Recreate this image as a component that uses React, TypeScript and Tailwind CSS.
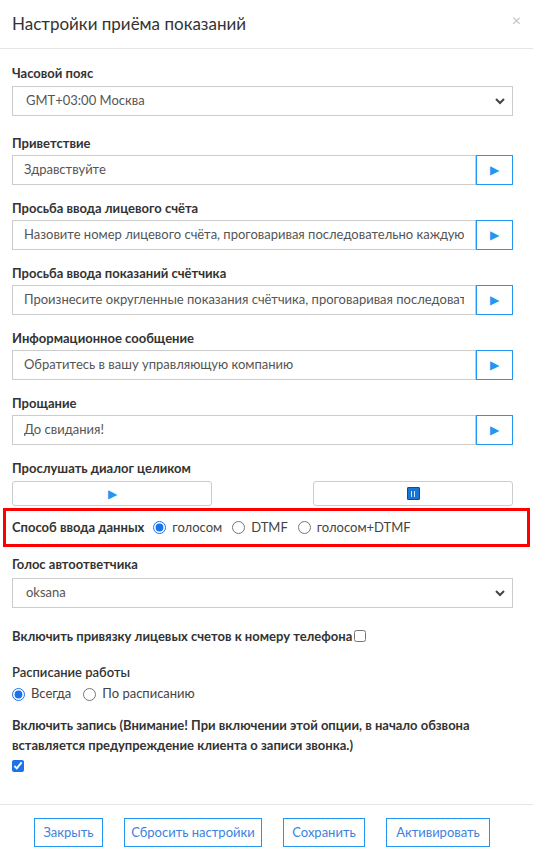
import React from 'react';

const font = "font-['Lato','Liberation_Sans',sans-serif]";

const Label: React.FC<{ children: React.ReactNode; className?: string }> = ({ children, className = '' }) => (
  <div className={`text-[13px] font-bold leading-[18px] text-[#333] ${className}`}>{children}</div>
);

const Chevron = () => (
  <svg width="12" height="12" viewBox="0 0 12 12" className="text-[#444]">
    <path d="M2 4l4 4 4-4" fill="none" stroke="currentColor" strokeWidth="2" />
  </svg>
);

const SelectBox: React.FC<{ value: string }> = ({ value }) => (
  <div className="flex h-[30px] items-center justify-between border border-[#ccc] bg-white pl-[13px] pr-[6px] text-[13px] text-[#555]">
    <span>{value}</span>
    <Chevron />
  </div>
);

const PlayGlyph = () => <span className="text-[12px] leading-none text-[#2196f3]">▶</span>;

const PromptField: React.FC<{ label: string; value: string }> = ({ label, value }) => (
  <div className="mb-[14px]">
    <Label className="mb-[3px]">{label}</Label>
    <div className="flex h-[30px]">
      <input
        readOnly
        value={value}
        className="min-w-0 flex-1 border border-[#ccc] bg-white px-[11px] text-[13px] text-[#555] outline-none"
      />
      <button className="flex w-[37px] items-center justify-center border border-[#2196f3] bg-white">
        <PlayGlyph />
      </button>
    </div>
  </div>
);

const Radio: React.FC<{ checked?: boolean; label: string; name: string }> = ({ checked, label, name }) => (
  <label className="flex items-center gap-[6px]">
    <input type="radio" name={name} defaultChecked={checked} className="m-0 h-[13px] w-[13px] accent-[#1a73e8]" />
    <span>{label}</span>
  </label>
);

const FooterButton: React.FC<{ children: React.ReactNode; w: string }> = ({ children, w }) => (
  <button className={`${w} h-[29px] border-[1.5px] border-[#2196f3] bg-white text-[13px] text-[#3b82e0]`}>
    {children}
  </button>
);

export default function App() {
  return (
    <div className={`${font} min-h-[855px] w-[533px] bg-white text-[#333]`}>
      <div className="flex h-[49px] items-center justify-between border-b border-[#e5e5e5] pl-3 pr-[12px]">
        <h4 className="text-[17px] text-[#333]">Настройки приёма показаний</h4>
        <span className="-mt-[8px] text-[16px] leading-none text-[#c4c4c4]">×</span>
      </div>

      <div className="pl-3 pr-[20px] pt-[15px]">
        <Label className="mb-[4px]">Часовой пояс</Label>
        <SelectBox value="GMT+03:00 Москва" />
        <div className="h-[18px]" />

        <PromptField label="Приветствие" value="Здравствуйте" />
        <PromptField
          label="Просьба ввода лицевого счёта"
          value="Назовите номер лицевого счёта, проговаривая последовательно каждую цифру"
        />
        <PromptField
          label="Просьба ввода показаний счётчика"
          value="Произнесите округленные показания счётчика, проговаривая последовательно каждую цифру"
        />
        <PromptField label="Информационное сообщение" value="Обратитесь в вашу управляющую компанию" />
        <PromptField label="Прощание" value="До свидания!" />

        <Label className="mt-[2px] mb-[4px]">Прослушать диалог целиком</Label>
        <div className="flex justify-between">
          <button className="flex h-[25px] w-[200px] items-center justify-center rounded-[3px] border border-[#ccc] bg-white">
            <PlayGlyph />
          </button>
          <button className="flex h-[25px] w-[200px] items-center justify-center rounded-[3px] border border-[#ccc] bg-white">
            <span className="flex h-[13px] w-[13px] items-center justify-center gap-[2px] rounded-[1px] border border-[#0b4f9c] bg-[#1976d2]">
              <span className="h-[6px] w-[1px] bg-[#cfe4ff]" />
              <span className="h-[6px] w-[1px] bg-[#cfe4ff]" />
            </span>
          </button>
        </div>
      </div>

      <div className="mx-[3px] mt-[2px] flex h-[39px] items-center gap-[9px] border-[3px] border-[#ff0000] pl-[6px] text-[13px]">
        <span className="font-bold">Способ ввода данных</span>
        <div className="flex items-center gap-[10px] text-[#444]">
          <Radio name="input" checked label="голосом" />
          <Radio name="input" label="DTMF" />
          <Radio name="input" label="голосом+DTMF" />
        </div>
      </div>

      <div className="pl-3 pr-[20px] pt-[8px]">
        <Label className="mb-[5px]">Голос автоответчика</Label>
        <SelectBox value="oksana" />

        <div className="mt-[19px] flex items-center gap-[2px]">
          <Label>Включить привязку лицевых счетов к номеру телефона</Label>
          <input type="checkbox" className="m-0 h-[12px] w-[12px]" />
        </div>

        <div className="mt-[18px] text-[13px] font-semibold leading-[18px]">Расписание работы</div>
        <div className="mt-[4px] flex h-[18px] items-center gap-[12px] text-[13px] text-[#444]">
          <Radio name="schedule" checked label="Всегда" />
          <Radio name="schedule" label="По расписанию" />
        </div>

        <div className="mt-[12px] text-[13px] font-bold leading-[20px]">
          Включить запись (Внимание! При включении этой опции, в начало обзвона вставляется предупреждение клиента о
          записи звонка.)
        </div>
        <div className="mt-[3px] flex h-[16px] items-center">
          <input type="checkbox" defaultChecked className="m-0 h-[12px] w-[12px] accent-[#1a73e8]" />
        </div>
      </div>

      <div className="mt-[30px] flex justify-center gap-[21px] border-t border-[#e5e5e5] pt-[13px] pb-[12px] pr-[9px]">
        <FooterButton w="w-[69px]">Закрыть</FooterButton>
        <FooterButton w="w-[138px]">Сбросить настройки</FooterButton>
        <FooterButton w="w-[82px]">Сохранить</FooterButton>
        <FooterButton w="w-[104px]">Активировать</FooterButton>
      </div>
    </div>
  );
}
